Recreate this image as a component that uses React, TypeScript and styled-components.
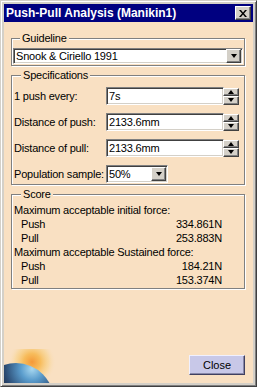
import React from 'react';
import styled, { createGlobalStyle } from 'styled-components';

const GlobalStyle = createGlobalStyle`
  html, body {
    margin: 0;
    padding: 0;
    background: #d4d0c8;
  }
  * {
    box-sizing: border-box;
  }
`;

const Window = styled.div`
  width: 257px;
  height: 387px;
  display: flex;
  flex-direction: column;
  background: #d4d0c8;
  border: 1px solid;
  border-color: #d4d0c8 #404040 #404040 #d4d0c8;
  box-shadow: inset 1px 1px 0 #fff, inset -1px -1px 0 #808080;
  padding: 3px;
  font-family: 'Liberation Sans', Arial, sans-serif;
  font-size: 11px;
  letter-spacing: -0.2px;
  color: #000;
`;

const TitleBar = styled.div`
  height: 18px;
  flex: none;
  display: flex;
  align-items: center;
  justify-content: space-between;
  background: #000080;
  padding: 0 2px 0 2px;
`;

const TitleText = styled.span`
  color: #fff;
  font-weight: bold;
  font-size: 12px;
  letter-spacing: 0;
`;

const Raised = styled.div`
  background: #d4d0c8;
  border: 1px solid;
  border-color: #fff #404040 #404040 #fff;
  box-shadow: inset -1px -1px 0 #808080;
  display: flex;
  align-items: center;
  justify-content: center;
`;

const TitleClose = styled(Raised)`
  width: 16px;
  height: 14px;
`;

const Body = styled.div`
  flex: 1;
  display: flex;
  flex-direction: column;
  background: #f9e0c2;
  padding: 10px 8px 8px 7px;
`;

const Group = styled.fieldset<{ $pad: string }>`
  margin: 0;
  min-width: 0;
  padding: ${(p) => p.$pad};
  border: 1px solid #808080;
  box-shadow: 1px 1px 0 #fff, inset 1px 1px 0 #fff;
  display: flex;
  flex-direction: column;
  & + & {
    margin-top: 3px;
  }
`;

const Legend = styled.legend`
  margin-left: 7px;
  padding: 0 2px;
  background: #f9e0c2;
  line-height: 13px;
`;

const Sunken = styled.div<{ $w?: number }>`
  height: 18px;
  ${(p) => (p.$w ? `width: ${p.$w}px;` : 'flex: 1;')}
  background: #fff;
  border: 1px solid;
  border-color: #808080 #fff #fff #808080;
  box-shadow: inset 1px 1px 0 #404040, inset -1px -1px 0 #d4d0c8;
  display: flex;
  align-items: center;
  padding: 0 0 0 2px;
`;

const FieldText = styled.span`
  flex: 1;
  white-space: nowrap;
`;

const DropButton = styled(Raised)`
  width: 15px;
  height: 14px;
  margin-right: 1px;
`;

const Triangle = styled.span<{ $up?: boolean }>`
  width: 0;
  height: 0;
  border-left: 3.5px solid transparent;
  border-right: 3.5px solid transparent;
  ${(p) => (p.$up ? 'border-bottom: 4px solid #000;' : 'border-top: 4px solid #000;')}
`;

const SpecRow = styled.div`
  display: grid;
  grid-template-columns: 92px 1fr;
  align-items: center;
  height: 18px;
  white-space: nowrap;
  & + & {
    margin-top: 8px;
  }
`;

const FieldWithSpin = styled.div`
  display: flex;
  align-items: center;
  margin-right: 4px;
`;

const Spin = styled.div`
  display: flex;
  flex-direction: column;
  width: 16px;
  height: 17px;
  margin-left: -1px;
`;

const SpinHalf = styled(Raised)`
  flex: 1;
`;

const ScoreLine = styled.div<{ $indent?: boolean }>`
  display: flex;
  justify-content: space-between;
  line-height: 14px;
  white-space: nowrap;
  padding-left: ${(p) => (p.$indent ? '7px' : '0')};
  padding-right: 21px;
`;

const Footer = styled.div`
  margin-top: auto;
  display: flex;
  align-items: flex-end;
  justify-content: space-between;
  margin-left: -7px;
  margin-bottom: -8px;
`;

const CloseButton = styled.button`
  width: 56px;
  height: 20px;
  margin-bottom: 8px;
  background: #c8c8e8;
  border: 1px solid;
  border-color: #f0f0ff #404060 #404060 #f0f0ff;
  box-shadow: inset -1px -1px 0 #8888a8;
  font-family: 'Liberation Sans', Arial, sans-serif;
  font-size: 11px;
  color: #000;
  padding: 0;
`;

function Planet() {
  return (
    <svg width="56" height="34" viewBox="0 0 56 34">
      <defs>
        <radialGradient id="glow" cx="28" cy="13" r="24" gradientUnits="userSpaceOnUse">
          <stop offset="0" stopColor="#f49838" />
          <stop offset="0.35" stopColor="#f7b850" stopOpacity="0.9" />
          <stop offset="0.7" stopColor="#f8d080" stopOpacity="0.5" />
          <stop offset="1" stopColor="#f9e0c2" stopOpacity="0" />
        </radialGradient>
        <radialGradient id="globe" cx="28" cy="20" r="38" gradientUnits="userSpaceOnUse">
          <stop offset="0" stopColor="#a8d8f0" />
          <stop offset="0.3" stopColor="#5a9ccc" />
          <stop offset="0.7" stopColor="#2c4c74" />
          <stop offset="1" stopColor="#1a2034" />
        </radialGradient>
      </defs>
      <rect x="0" y="0" width="56" height="34" fill="url(#glow)" />
      <circle cx="12" cy="52" r="38" fill="url(#globe)" />
    </svg>
  );
}

function SpinField({ value }: { value: string }) {
  return (
    <FieldWithSpin>
      <Sunken>
        <FieldText>{value}</FieldText>
      </Sunken>
      <Spin>
        <SpinHalf><Triangle $up /></SpinHalf>
        <SpinHalf><Triangle /></SpinHalf>
      </Spin>
    </FieldWithSpin>
  );
}

export default function App() {
  return (
    <>
      <GlobalStyle />
      <Window>
        <TitleBar>
          <TitleText>Push-Pull Analysis (Manikin1)</TitleText>
          <TitleClose>
            <svg width="8" height="7" viewBox="0 0 8 7">
              <path d="M0 0h2l2 2.5L6 0h2L5 3.5 8 7H6L4 4.5 2 7H0l3-3.5z" fill="#000" />
            </svg>
          </TitleClose>
        </TitleBar>
        <Body>
          <Group $pad="3px 1px 1px 1px">
            <Legend>Guideline</Legend>
            <Sunken>
              <FieldText>Snook &amp; Ciriello 1991</FieldText>
              <DropButton>
                <Triangle />
              </DropButton>
            </Sunken>
          </Group>

          <Group $pad="5px 1px 1px 2px">
            <Legend>Specifications</Legend>
            <SpecRow>
              <span>1 push every:</span>
              <SpinField value="7s" />
            </SpecRow>
            <SpecRow>
              <span>Distance of push:</span>
              <SpinField value="2133.6mm" />
            </SpecRow>
            <SpecRow>
              <span>Distance of pull:</span>
              <SpinField value="2133.6mm" />
            </SpecRow>
            <SpecRow>
              <span>Population sample:</span>
              <Sunken $w={62}>
                <FieldText>50%</FieldText>
                <DropButton>
                  <Triangle />
                </DropButton>
              </Sunken>
            </SpecRow>
          </Group>

          <Group $pad="2px 1px 1px 2px">
            <Legend>Score</Legend>
            <ScoreLine>Maximum acceptable initial force:</ScoreLine>
            <ScoreLine $indent><span>Push</span><span>334.861N</span></ScoreLine>
            <ScoreLine $indent><span>Pull</span><span>253.883N</span></ScoreLine>
            <ScoreLine>Maximum acceptable Sustained force:</ScoreLine>
            <ScoreLine $indent><span>Push</span><span>184.21N</span></ScoreLine>
            <ScoreLine $indent><span>Pull</span><span>153.374N</span></ScoreLine>
          </Group>

          <Footer>
            <Planet />
            <CloseButton>Close</CloseButton>
          </Footer>
        </Body>
      </Window>
    </>
  );
}
